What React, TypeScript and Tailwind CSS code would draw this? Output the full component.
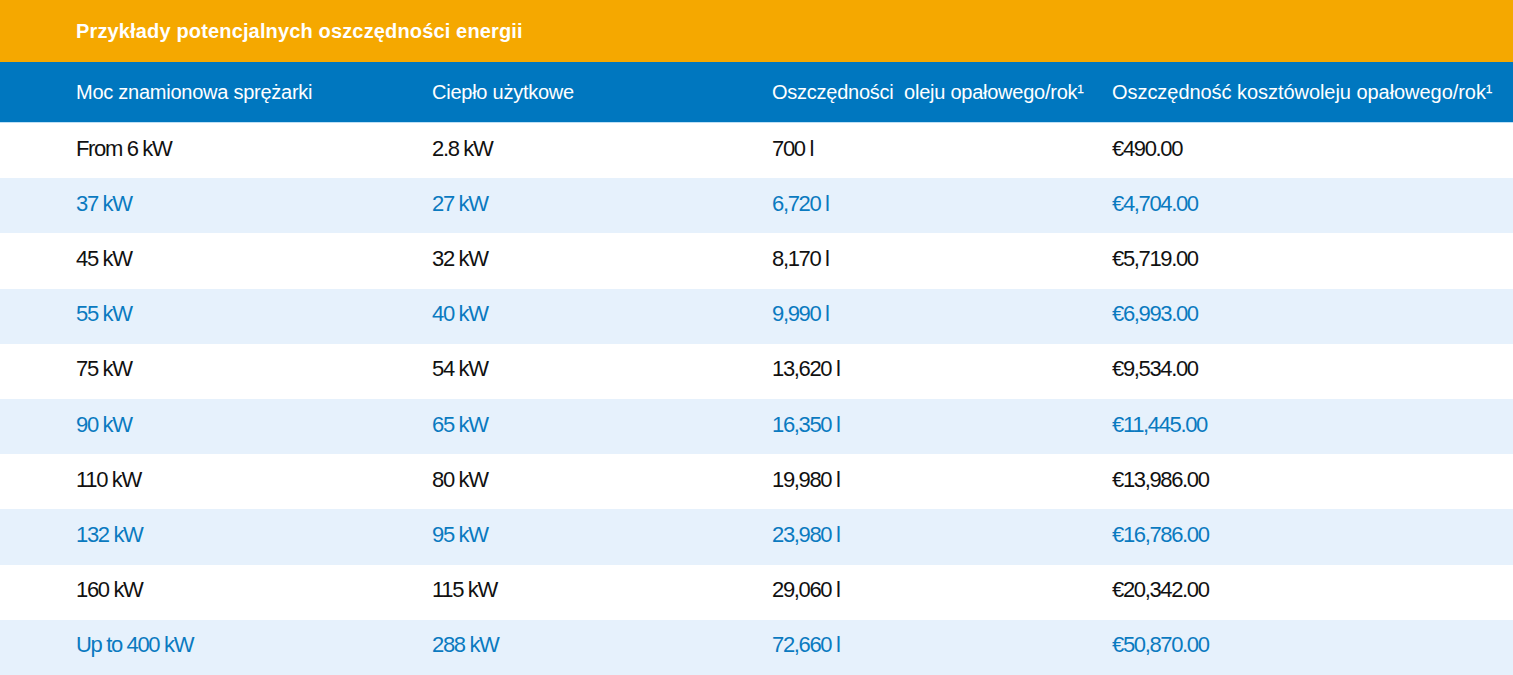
import React from "react";

const rows: [string, string, string, string][] = [
  ["From 6 kW", "2.8 kW", "700 l", "€490.00"],
  ["37 kW", "27 kW", "6,720 l", "€4,704.00"],
  ["45 kW", "32 kW", "8,170 l", "€5,719.00"],
  ["55 kW", "40 kW", "9,990 l", "€6,993.00"],
  ["75 kW", "54 kW", "13,620 l", "€9,534.00"],
  ["90 kW", "65 kW", "16,350 l", "€11,445.00"],
  ["110 kW", "80 kW", "19,980 l", "€13,986.00"],
  ["132 kW", "95 kW", "23,980 l", "€16,786.00"],
  ["160 kW", "115 kW", "29,060 l", "€20,342.00"],
  ["Up to 400 kW", "288 kW", "72,660 l", "€50,870.00"],
];

const font = { fontFamily: '"Liberation Sans", Arial, sans-serif' };

export default function App() {
  return (
    <div className="w-[1513px] h-[675px] overflow-hidden bg-white" style={font}>
      <div className="h-[62px] bg-[#f5a800] flex items-center pl-[76px]">
        <span className="text-white font-bold text-[20px] tracking-[0.15px]">
          Przykłady potencjalnych oszczędności energii
        </span>
      </div>
      <div className="h-[60px] bg-[#0077bf] grid grid-cols-[356px_340px_340px_1fr] items-center pl-[76px] text-white text-[20px] tracking-[-0.25px]">
        <span>Moc znamionowa sprężarki</span>
        <span>Ciepło użytkowe</span>
        <span>Oszczędności&nbsp; oleju opałowego/rok¹</span>
        <span className="tracking-[-0.05px]">Oszczędność kosztówoleju opałowego/rok¹</span>
      </div>
      <div className="h-[1px] bg-[#bfe0f5]" />
      {rows.map((r, i) => (
        <div
          key={i}
          className={
            i % 2 === 0
              ? "h-[55.2px] bg-white text-[#111111] grid grid-cols-[356px_340px_340px_1fr] items-center pl-[76px] text-[22px] tracking-[-1.35px] pb-[5px]"
              : "h-[55.2px] bg-[#e6f1fc] text-[#0a7ac0] grid grid-cols-[356px_340px_340px_1fr] items-center pl-[76px] text-[22px] tracking-[-1.35px] pb-[5px]"
          }
        >
          {r.map((c, j) => (
            <span key={j}>{c}</span>
          ))}
        </div>
      ))}
    </div>
  );
}
